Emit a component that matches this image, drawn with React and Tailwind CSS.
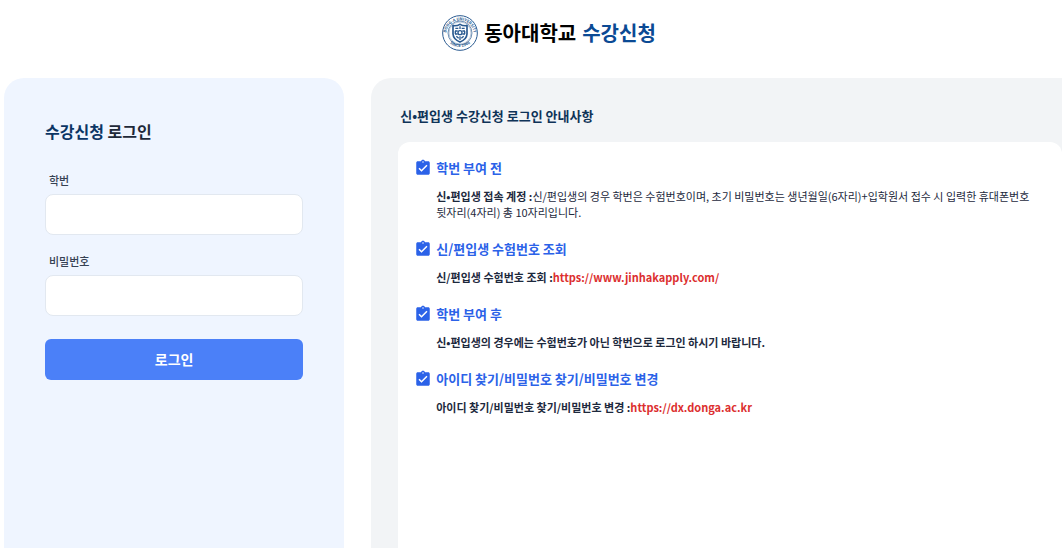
import { MdAssignmentTurnedIn } from 'react-icons/md';

const Seal = () => (
    <svg viewBox="0 0 108 108" className="w-9 h-9" fill="none" stroke="#2a5a90" aria-hidden="true">
        <defs>
            <path id="seal-top" d="M 14 66 A 41 41 0 1 1 94 66" />
            <path id="seal-bottom" d="M 14 74 A 47 47 0 0 0 94 74" />
        </defs>
        <circle cx="54" cy="54" r="52" strokeWidth="3" />
        <circle cx="54" cy="54" r="36" strokeWidth="2" />
        <circle cx="54" cy="54" r="33" strokeWidth="1" />
        <g fill="#2a5a90" stroke="none" fontSize="12" fontWeight="700">
            <text textAnchor="middle">
                <textPath href="#seal-top" startOffset="50%">DONG-A UNIVERSITY</textPath>
            </text>
            <text textAnchor="middle">
                <textPath href="#seal-bottom" startOffset="50%">SINCE 1946</textPath>
            </text>
        </g>
        <path d="M54 28 Q46 33 33 32 V57 Q34 73 54 81 Q74 73 75 57 V32 Q62 33 54 28 Z" strokeWidth="5" />
        <path d="M54 34 V42 M54 64 V75 M40 40 H49 M59 40 H68" strokeWidth="4" />
        <path d="M39 48 H47 M39 57 H47 M40 48 V57 M61 48 H69 M61 57 H69 M68 48 V57 M43 64 L50 70 M65 64 L58 70" strokeWidth="4" />
        <circle cx="54" cy="53" r="6" strokeWidth="4" />
    </svg>
);

const Field = ({ id, label, type }) => (
    <div className="flex flex-col">
        <label htmlFor={id} className="pl-1 mb-1.5 text-[11px] leading-4 font-medium text-gray-700">
            {label}
        </label>
        <input
            id={id}
            type={type}
            className="w-full h-[41px] px-3 rounded-lg border border-slate-200 bg-white text-sm outline-none focus:border-blue-500"
        />
    </div>
);

const ExtLink = ({ href }) => (
    <a href={href} className="font-bold text-[#dc2f2f] hover:underline">
        {href}
    </a>
);

const notices = [
    {
        title: '학번 부여 전',
        lead: '신•편입생 접속 계정 :',
        text: '신/편입생의 경우 학번은 수험번호이며, 초기 비밀번호는 생년월일(6자리)+입학원서 접수 시 입력한 휴대폰번호 뒷자리(4자리) 총 10자리입니다.',
    },
    {
        title: '신/편입생 수험번호 조회',
        lead: '신/편입생 수험번호 조회 :',
        link: 'https://www.jinhakapply.com/',
    },
    {
        title: '학번 부여 후',
        lead: '신•편입생의 경우에는 수험번호가 아닌 학번으로 로그인 하시기 바랍니다.',
    },
    {
        title: '아이디 찾기/비밀번호 찾기/비밀번호 변경',
        lead: '아이디 찾기/비밀번호 찾기/비밀번호 변경 :',
        link: 'https://dx.donga.ac.kr',
    },
];

const App = () => {
    return (
        <div className="min-h-screen flex flex-col bg-white break-keep font-['Noto_Sans_CJK_KR','Noto_Sans',sans-serif]">
            <header className="h-[78px] pb-3 pl-9 flex items-center justify-center gap-1.5">
                <Seal />
                <h1 className="flex gap-1.5 text-[20px] leading-7 font-bold">
                    <span className="text-black">동아대학교</span>
                    <span className="text-[#0b4a94]">수강신청</span>
                </h1>
            </header>

            <div className="flex-1 grid grid-cols-[33fr_67fr] gap-[27px] pl-1">
                {/* Login form */}
                <section className="rounded-t-[20px] bg-[#eff5ff] px-[41px] pt-[39px]">
                    <h2 className="text-[16px] leading-7 font-bold text-gray-800">
                        <span className="text-[#0b3565]">수강신청</span> 로그인
                    </h2>
                    <form className="mt-[27px] flex flex-col gap-[18px]" onSubmit={(e) => e.preventDefault()}>
                        <Field id="studentId" label="학번" type="text" />
                        <Field id="password" label="비밀번호" type="password" />
                        <button
                            type="submit"
                            className="mt-[5px] h-[41px] rounded-md bg-[#4b80f8] hover:bg-blue-600 text-[14px] font-bold text-white"
                        >
                            로그인
                        </button>
                    </form>
                </section>

                {/* Notices */}
                <section className="rounded-tl-[20px] bg-[#f2f4f6] pl-[27px] pt-7 flex flex-col">
                    <h2 className="pl-0.5 mb-4 text-[13px] leading-5 font-bold text-[#0f3358]">
                        신•편입생 수강신청 로그인 안내사항
                    </h2>
                    <ul className="flex-1 rounded-t-xl bg-white px-4 pt-4 flex flex-col gap-[19px]">
                        {notices.map((notice) => (
                            <li key={notice.title}>
                                <h3 className="flex items-center gap-1 text-[13px] leading-5 font-bold text-[#2b62e8]">
                                    <MdAssignmentTurnedIn className="w-[18px] h-[18px]" />
                                    {notice.title}
                                </h3>
                                <p className="mt-2.5 pl-[22px] text-[11px] leading-4 text-slate-800">
                                    <strong className="font-bold">{notice.lead}</strong>
                                    {notice.text}
                                    {notice.link && <ExtLink href={notice.link} />}
                                </p>
                            </li>
                        ))}
                    </ul>
                </section>
            </div>
        </div>
    );
};

export default App;
